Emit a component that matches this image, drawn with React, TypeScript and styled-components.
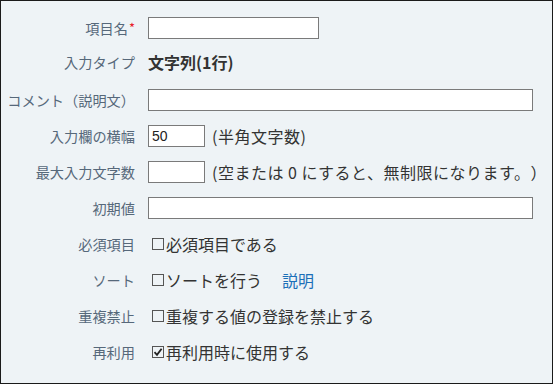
import styled, { createGlobalStyle } from "styled-components";

const GlobalStyle = createGlobalStyle`
  html, body {
    margin: 0;
    padding: 0;
    background: #ffffff;
  }
  body {
    font-family: "Noto Sans CJK JP", "Noto Sans", sans-serif;
  }
`;

interface CheckProps {
  label: string;
  checked?: boolean;
}

const CheckOption = ({ label, checked }: CheckProps) => {
  return (
    <CheckLabel>
      <Box>
        {checked && (
          <svg width="10" height="10" viewBox="0 0 10 10">
            <path d="M1.5 5.2 L4 7.8 L8.6 1.8" fill="none" stroke="#222" strokeWidth="1.8" />
          </svg>
        )}
      </Box>
      {label}
    </CheckLabel>
  );
};

export default function App() {
  return (
    <>
      <GlobalStyle />
      <Frame>
        <Form>
          <Label>
            項目名<Required>*</Required>
          </Label>
          <Value>
            <TextInput $width={171} />
          </Value>

          <Label $raise>入力タイプ</Label>
          <Value $raise>
            <Strong>文字列(1行)</Strong>
          </Value>

          <Label>コメント（説明文）</Label>
          <Value>
            <TextInput $width={385} />
          </Value>

          <Label>入力欄の横幅</Label>
          <Value>
            <TextInput $width={57} defaultValue="50" />
            <Note>(半角文字数)</Note>
          </Value>

          <Label>最大入力文字数</Label>
          <Value>
            <TextInput $width={57} />
            <Note>(空または 0 にすると、無制限になります。）</Note>
          </Value>

          <Label>初期値</Label>
          <Value>
            <TextInput $width={385} />
          </Value>

          <Label>必須項目</Label>
          <Value>
            <CheckOption label="必須項目である" />
          </Value>

          <Label>ソート</Label>
          <Value>
            <CheckOption label="ソートを行う" />
            <HelpLink href="#">説明</HelpLink>
          </Value>

          <Label>重複禁止</Label>
          <Value>
            <CheckOption label="重複する値の登録を禁止する" />
          </Value>

          <Label>再利用</Label>
          <Value>
            <CheckOption label="再利用時に使用する" checked />
          </Value>
        </Form>
      </Frame>
    </>
  );
}

const Frame = styled.div`
  box-sizing: border-box;
  width: 553px;
  height: 384px;
  border: 1px solid #1a1a1a;
  background: #eef3f6;
  padding-top: 9px;
`;

const Form = styled.div`
  display: grid;
  grid-template-columns: 134px 1fr;
  grid-auto-rows: 36px;
  column-gap: 13px;
`;

const Label = styled.div<{ $raise?: boolean }>`
  display: flex;
  align-items: center;
  justify-content: flex-end;
  font-size: 14.2px;
  color: #56687a;
  white-space: nowrap;
  padding-bottom: ${(p) => (p.$raise ? "4px" : "0")};
`;

const Required = styled.span`
  color: #e8202a;
  font-size: 13px;
  margin-left: 1px;
  align-self: flex-start;
  margin-top: 8px;
`;

const Value = styled.div<{ $raise?: boolean }>`
  display: flex;
  align-items: center;
  font-size: 16px;
  color: #333333;
  white-space: nowrap;
  padding-bottom: ${(p) => (p.$raise ? "4px" : "0")};
`;

const Strong = styled.span`
  font-weight: bold;
  font-size: 16px;
`;

const TextInput = styled.input<{ $width: number }>`
  box-sizing: border-box;
  width: ${(p) => p.$width}px;
  height: 22px;
  border: 1px solid #7a7a7a;
  background: #ffffff;
  padding: 0 3px;
  margin: 0;
  font-family: "Liberation Sans", "Noto Sans", sans-serif;
  font-size: 14px;
  color: #222;
  outline: none;
`;

const Note = styled.span`
  margin-left: 7px;
  font-size: 16px;
  letter-spacing: 0.5px;
  text-spacing-trim: space-all;
`;

const CheckLabel = styled.label`
  display: flex;
  align-items: center;
`;

const Box = styled.span`
  box-sizing: border-box;
  display: flex;
  align-items: center;
  justify-content: center;
  width: 12px;
  height: 12px;
  border: 1px solid #555555;
  margin: 0 2px 0 4px;
`;

const HelpLink = styled.a`
  margin-left: 20px;
  color: #1c6fb8;
  text-decoration: none;
`;
